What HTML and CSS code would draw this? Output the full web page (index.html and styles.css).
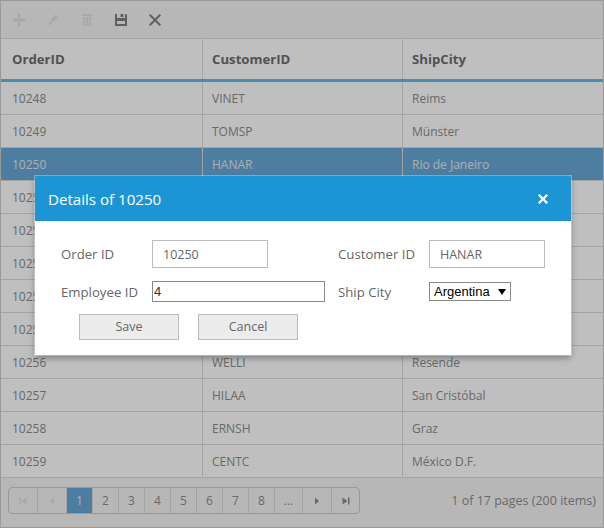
FILE: index.html
```html
<!DOCTYPE html>
<html lang="en">
<head>
<meta charset="utf-8">
<title>Grid</title>
<link rel="stylesheet" href="styles.css">
</head>
<body>
<div class="grid">
  <div class="toolbar">
    <svg class="tool" viewBox="0 0 14 14"><path class="dim" d="M5.500 1h3v4.500h4.500v3h-4.500v4.500h-3v-4.500h-4.500v-3h4.500z"/></svg>
    <svg class="tool" viewBox="0 0 14 14"><path class="dim" d="M9.500 1.500l3 3-5 5-3-3zM3.800 7.500l2.700 2.700-2 1.300-2.500 1 1-2.500z"/></svg>
    <svg class="tool" viewBox="0 0 14 14"><path class="dim" d="M3 1h8v1h1v1h-10v-1h1zM3 4h8v9h-8zM5 5.500v6h1v-6zM8 5.500v6h1v-6z" fill-rule="evenodd"/></svg>
    <svg class="tool" viewBox="0 0 14 14"><path class="dark" d="M1 1h2v4h8v-4h1l1 1v11h-12zM6.500 1h3v3h-3zM3 8v3h8v-3z" fill-rule="evenodd"/></svg>
    <svg class="tool" viewBox="0 0 14 14"><path class="dark" d="M2.400 1l4.600 4.600 4.600-4.600 1.400 1.400-4.600 4.600 4.600 4.600-1.400 1.400-4.600-4.600-4.600 4.600-1.400-1.400 4.600-4.600-4.600-4.600z"/></svg>
  </div>
  <div class="row head"><div>OrderID</div><div>CustomerID</div><div>ShipCity</div></div>
  <div class="row"><div>10248</div><div>VINET</div><div>Reims</div></div>
  <div class="row"><div>10249</div><div>TOMSP</div><div>Münster</div></div>
  <div class="row selected"><div>10250</div><div>HANAR</div><div>Rio de Janeiro</div></div>
  <div class="row"><div>10251</div><div>VICTE</div><div>Lyon</div></div>
  <div class="row"><div>10252</div><div>SUPRD</div><div>Charleroi</div></div>
  <div class="row"><div>10253</div><div>HANAR</div><div>Rio de Janeiro</div></div>
  <div class="row"><div>10254</div><div>CHOPS</div><div>Bern</div></div>
  <div class="row"><div>10255</div><div>RICSU</div><div>Genève</div></div>
  <div class="row"><div>10256</div><div>WELLI</div><div>Resende</div></div>
  <div class="row"><div>10257</div><div>HILAA</div><div>San Cristóbal</div></div>
  <div class="row"><div>10258</div><div>ERNSH</div><div>Graz</div></div>
  <div class="row"><div>10259</div><div>CENTC</div><div>México D.F.</div></div>
  <div class="footer">
    <div class="pager">
      <span class="nav"><svg viewBox="0 0 10 10"><path class="dim" d="M1.500 1.500h1.500v7h-1.500zM8.500 1.500v7l-5-3.500z"/></svg></span>
      <span class="nav"><svg viewBox="0 0 10 10"><path class="dim" d="M7 1.500v7l-4-3.500z"/></svg></span>
      <span class="page current">1</span>
      <span class="page">2</span>
      <span class="page">3</span>
      <span class="page">4</span>
      <span class="page">5</span>
      <span class="page">6</span>
      <span class="page">7</span>
      <span class="page">8</span>
      <span class="page more">...</span>
      <span class="nav"><svg viewBox="0 0 10 10"><path class="mid" d="M3 1.500v7l4-3.500z"/></svg></span>
      <span class="nav last"><svg viewBox="0 0 10 10"><path class="mid" d="M1.500 1.500v7l5-3.500zM7 1.500h1.500v7h-1.500z"/></svg></span>
    </div>
    <div class="info">1 of 17 pages (200 items)</div>
  </div>
</div>
<div class="overlay"></div>
<div class="dialog">
  <div class="dialog-head">
    <span>Details of 10250</span>
    <svg class="close" viewBox="0 0 12 12"><path d="M2.600 1l3.400 3.400 3.400-3.400 1.600 1.600-3.400 3.400 3.400 3.400-1.600 1.600-3.400-3.400-3.400 3.400-1.600-1.600 3.400-3.400-3.400-3.400z"/></svg>
  </div>
  <div class="dialog-body">
    <div class="form">
      <label class="lbl">Order ID</label>
      <div><input class="text" value="10250"></div>
      <label class="lbl">Customer ID</label>
      <div><input class="text" value="HANAR"></div>
      <label class="lbl">Employee ID</label>
      <div><input class="plain" value="4"></div>
      <label class="lbl">Ship City</label>
      <div class="select-wrap"><select class="city"><option>Argentina</option></select></div>
    </div>
    <div class="actions">
      <button class="btn">Save</button>
      <button class="btn">Cancel</button>
    </div>
  </div>
</div>
</body>
</html>
```
FILE: styles.css
```css
* { box-sizing: border-box; }
html, body { margin: 0; padding: 0; }
body {
  width: 604px;
  height: 528px;
  overflow: hidden;
  font-family: "Open Sans", "Noto Sans", sans-serif;
  background: #fff;
  color: #888;
}
.grid {
  width: 604px;
  height: 528px;
  border: 1px solid #ccc;
  display: flex;
  flex-direction: column;
}
.toolbar {
  height: 38px;
  flex: none;
  background: #f5f5f5;
  border-bottom: 1px solid #ddd;
  display: flex;
  align-items: center;
  padding-left: 11px;
  gap: 20px;
}
.tool { width: 14px; height: 14px; flex: none; }
.dim { fill: #e2e2e2; }
.mid { fill: #8c8c8c; }
.dark { fill: #808080; }
.row {
  display: grid;
  grid-template-columns: 202px 200px 200px;
  height: 33px;
  flex: none;
  border-bottom: 1px solid #ddd;
  font-size: 12px;
  color: #8c8c8c;
}
.row > div {
  padding: 1px 0 0 9px;
  border-right: 1px solid #ddd;
  line-height: 32px;
}
.row > div:first-child { padding-left: 11px; }
.row > div:last-child { border-right: 0; }
.row.head {
  height: 43px;
  border-bottom: 3px solid #60bce8;
  font-size: 13.200px;
  font-weight: 700;
  color: #6e6e6e;
}
.row.head > div { line-height: 39px; }
.row.selected { background: #67a8d8; color: #e8e8e8; }
.footer {
  flex: 1;
  background: #f5f5f5;
  display: flex;
  justify-content: space-between;
  align-items: flex-start;
  padding: 9px 7px 0 7px;
}
.pager {
  display: flex;
  height: 27px;
  border: 1px solid #ccc;
  border-radius: 4px;
  font-size: 12px;
  background: #f5f5f5;
}
.page, .nav {
  display: flex;
  align-items: center;
  justify-content: center;
  border-right: 1px solid #ddd;
  color: #8c8c8c;
}
.page { width: 26px; }
.nav { width: 29px; }
.nav svg { width: 10px; height: 10px; }
.nav.last { border-right: 0; width: 27px; }
.page.more { width: 28px; }
.page.current { background: #67a8d8; color: #eee; }
.info { font-size: 12.500px; line-height: 27px; color: #8c8c8c; }
.overlay {
  position: absolute;
  inset: 0;
  background: rgba(0, 0, 0, 0.25);
}
.dialog {
  position: absolute;
  left: 35px;
  top: 176px;
  width: 536px;
  height: 179px;
  background: #fff;
  box-shadow: 0 0 0 1px rgba(255, 255, 255, 0.35), 0 3px 6px rgba(0, 0, 0, 0.35);
  display: flex;
  flex-direction: column;
}
.dialog-head {
  height: 45px;
  flex: none;
  background: #1b95d3;
  color: #fff;
  font-size: 15.100px;
  display: flex;
  align-items: center;
  justify-content: space-between;
  padding: 0 22px 0 13px;
}
.close { width: 12px; height: 12px; fill: #fff; }
.dialog-body { padding: 19px 26px 0; }
.form {
  display: grid;
  grid-template-columns: 91px 186px 91px 1fr;
  grid-template-rows: 28px 21px;
  row-gap: 13px;
  align-items: center;
}
.lbl { font-size: 13.200px; color: #666; }
.text {
  display: block;
  width: 116px;
  height: 28px;
  border: 1px solid #bbb;
  background: #fff;
  padding: 0 10px;
  font: 12.500px "Open Sans", sans-serif;
  color: #666;
  outline: 0;
}
.plain {
  display: block;
  width: 173px;
  height: 21px;
  border: 1px solid #888;
  background: #fff;
  padding: 0 1px;
  font: 13px "Liberation Sans", sans-serif;
  color: #333;
}
.select-wrap { position: relative; width: 82px; }
.select-wrap::after {
  content: "";
  position: absolute;
  right: 5px;
  top: 7px;
  border-style: solid;
  border-width: 6px 4px 0;
  border-color: #000 transparent transparent;
  pointer-events: none;
}
.city {
  display: block;
  width: 82px;
  height: 19px;
  appearance: none;
  border: 1px solid #888;
  border-radius: 0;
  background: #fff;
  padding: 0 0 0 4px;
  font: 13px "Liberation Sans", sans-serif;
  color: #000;
}
.actions {
  display: flex;
  gap: 19px;
  margin-top: 12px;
  padding-left: 18px;
}
.btn {
  width: 100px;
  height: 26px;
  border: 1px solid #bbb;
  background: #ececec;
  font: 12.500px "Open Sans", sans-serif;
  color: #666;
  padding: 0 0 2px;
}
```
